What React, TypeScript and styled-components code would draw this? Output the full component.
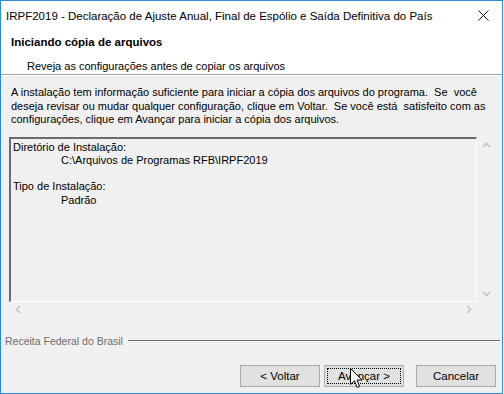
import React from 'react';
import styled, { createGlobalStyle } from 'styled-components';

const GlobalStyle = createGlobalStyle`
	html, body {
		margin: 0;
		padding: 0;
		background: #ffffff;
	}
	body {
		font-family: "Liberation Sans", Arial, sans-serif;
	}
`;

const Chevron: React.FC<{ dir: 'up' | 'down' | 'left' | 'right' }> = ({ dir }) => {
	const rot = { up: 0, right: 90, down: 180, left: 270 }[dir];
	return (
		<svg width="9" height="9" viewBox="0 0 9 9" style={{ transform: `rotate(${rot}deg)` }}>
			<polyline points="1,6 4.5,2.5 8,6" fill="none" stroke="#c4c4c4" strokeWidth="1.6" />
		</svg>
	);
};

export default function App() {
	return (
		<>
			<GlobalStyle />
			<Window>
				<TitleBar>
					<TitleText>IRPF2019 - Declaração de Ajuste Anual, Final de Espólio e Saída Definitiva do País</TitleText>
					<CloseButton>
						<svg width="11" height="11" viewBox="0 0 11 11">
							<path d="M0.5 0.5 L10.5 10.5 M10.5 0.5 L0.5 10.5" stroke="#111" strokeWidth="1" />
						</svg>
					</CloseButton>
				</TitleBar>
				<Header>
					<HeaderTitle>Iniciando cópia de arquivos</HeaderTitle>
					<HeaderSubtitle>Reveja as configurações antes de copiar os arquivos</HeaderSubtitle>
				</Header>
				<Body>
					<Intro>
						A instalação tem informação suficiente para iniciar a cópia dos arquivos do programa.&nbsp; Se&nbsp; você
						<br />
						deseja revisar ou mudar qualquer configuração, clique em Voltar.&nbsp; Se você está&nbsp; satisfeito com as
						<br />
						configurações, clique em Avançar para iniciar a cópia dos arquivos.
					</Intro>
					<ScrollPane>
						<TextBox>
							<Label>Diretório de Instalação:</Label>
							<Value>C:\Arquivos de Programas RFB\IRPF2019</Value>
							<Spacer />
							<Label>Tipo de Instalação:</Label>
							<Value>Padrão</Value>
						</TextBox>
						<VScroll>
							<Chevron dir="up" />
							<Chevron dir="down" />
						</VScroll>
						<HScroll>
							<Chevron dir="left" />
							<Chevron dir="right" />
						</HScroll>
					</ScrollPane>
				</Body>
				<Brand>
					<BrandText>Receita Federal do Brasil</BrandText>
					<BrandLine />
				</Brand>
				<ButtonRow>
					<NavGroup>
						<Button>&lt; Voltar</Button>
						<Button $focused>Avançar &gt;</Button>
					</NavGroup>
					<Button>Cancelar</Button>
				</ButtonRow>
				<Cursor>
					<svg width="13" height="21" viewBox="0 0 13 21">
						<path
							d="M0.5 0.5 L0.5 16.5 L4.5 12.8 L7.2 19.5 L9.6 18.5 L7 12 L12 12 Z"
							fill="#fff"
							stroke="#000"
							strokeWidth="1"
							strokeLinejoin="round"
						/>
					</svg>
				</Cursor>
			</Window>
		</>
	);
}

const Window = styled.div`
	position: relative;
	width: 503px;
	height: 394px;
	box-sizing: border-box;
	border: 1px solid #2f8ad8;
	background: #f0f0f0;
	display: flex;
	flex-direction: column;
	color: #000;
	font-size: 11px;
	overflow: hidden;
`;

const TitleBar = styled.div`
	height: 29px;
	background: #fff;
	display: flex;
	align-items: center;
	justify-content: space-between;
	padding-left: 5px;
`;

const TitleText = styled.div`
	font-size: 11.5px;
	color: #000;
	white-space: nowrap;
`;

const CloseButton = styled.div`
	width: 38px;
	height: 29px;
	display: flex;
	align-items: center;
	justify-content: center;
`;

const Header = styled.div`
	height: 45px;
	background: #fff;
	border-bottom: 1px solid #a0a0a0;
	box-shadow: 0 1px 0 #fff;
	padding: 5px 0 0 10px;
	box-sizing: border-box;
	display: flex;
	flex-direction: column;
`;

const HeaderTitle = styled.div`
	font-weight: bold;
	font-size: 11.5px;
	line-height: 14px;
`;

const HeaderSubtitle = styled.div`
	font-size: 11px;
	line-height: 14px;
	margin: 10px 0 0 16px;
`;

const Body = styled.div`
	padding: 11px 7px 0 8px;
	display: flex;
	flex-direction: column;
`;

const Intro = styled.div`
	line-height: 13.5px;
	padding-left: 2px;
	white-space: nowrap;
`;

const ScrollPane = styled.div`
	margin-top: 10px;
	display: grid;
	grid-template-columns: 468px 17px;
	grid-template-rows: 165px 16px;
`;

const TextBox = styled.div`
	box-sizing: border-box;
	border-top: 2px solid #6b6b6b;
	border-left: 2px solid #6b6b6b;
	border-right: 1px solid #fff;
	border-bottom: 1px solid #fff;
	background: #f0f0f0;
	padding: 2px 0 0 2px;
	line-height: 13.3px;
`;

const Label = styled.div``;

const Value = styled.div`
	padding-left: 48px;
`;

const Spacer = styled.div`
	height: 13.3px;
`;

const VScroll = styled.div`
	display: flex;
	flex-direction: column;
	justify-content: space-between;
	align-items: center;
	padding: 4px 0 4px 2px;
`;

const HScroll = styled.div`
	display: flex;
	justify-content: space-between;
	align-items: center;
	padding: 0 4px 0 5px;
`;

const Brand = styled.div`
	margin-top: 17px;
	display: flex;
	align-items: center;
	padding: 0 2px 0 4px;
`;

const BrandText = styled.div`
	color: #6d6d6d;
	font-size: 10.5px;
	white-space: nowrap;
`;

const BrandLine = styled.div`
	flex: 1;
	margin-left: 5px;
	height: 0;
	border-top: 1px solid #6d6d6d;
	border-bottom: 1px solid #fff;
`;

const ButtonRow = styled.div`
	margin-top: 18px;
	display: flex;
	justify-content: flex-end;
	gap: 12px;
	padding-right: 6px;
`;

const NavGroup = styled.div`
	display: flex;
	gap: 4px;
`;

const Button = styled.div<{ $focused?: boolean }>`
	position: relative;
	width: 80px;
	height: 22px;
	box-sizing: border-box;
	background: #e1e1e1;
	border: 1px solid #adadad;
	display: flex;
	align-items: center;
	justify-content: center;
	font-size: 11.5px;
	color: #000;
	${p => p.$focused && `
		&::after {
			content: '';
			position: absolute;
			inset: 2px;
			border: 1px dotted #000;
		}
	`}
`;

const Cursor = styled.div`
	position: absolute;
	left: 349px;
	top: 367px;
	line-height: 0;
`;
